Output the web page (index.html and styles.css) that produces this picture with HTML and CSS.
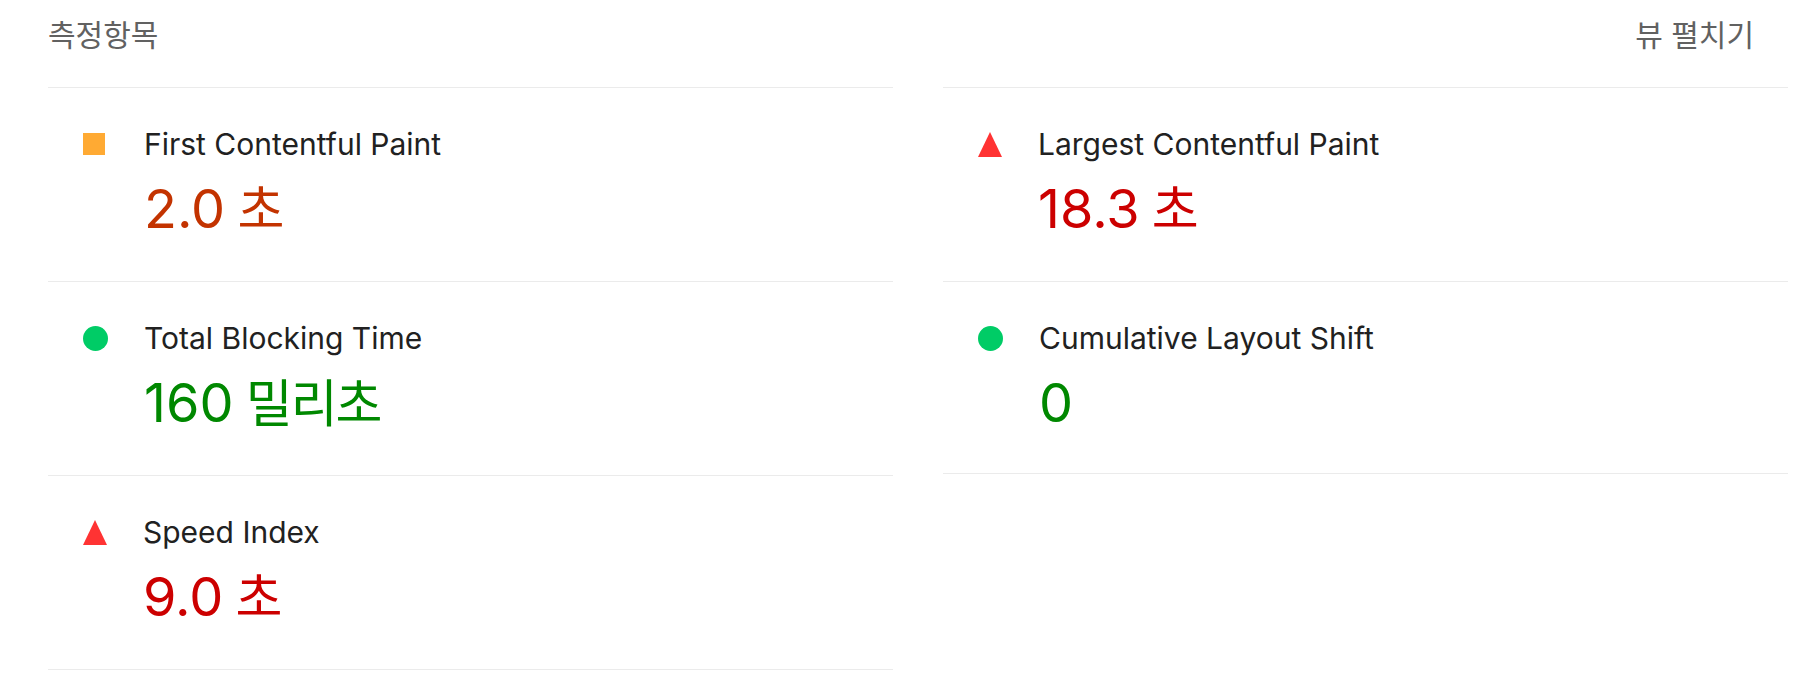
FILE: index.html
```html
<!DOCTYPE html>
<html lang="ko">
<head>
<meta charset="utf-8">
<title>측정항목</title>
<link rel="stylesheet" href="styles.css">
</head>
<body>
<div class="metrics">
  <div class="metrics-header">
    <span class="metrics-title">측정항목</span>
    <span class="metrics-toggle">뷰 펼치기</span>
  </div>
  <div class="metrics-grid">
    <div class="metrics-col">
      <div class="metric">
        <span class="icon icon-average"></span>
        <div class="metric-body">
          <div class="metric-title">First Contentful Paint</div>
          <div class="metric-value value-average">2.0 <span class="unit">초</span></div>
        </div>
      </div>
      <div class="metric">
        <span class="icon icon-pass"></span>
        <div class="metric-body">
          <div class="metric-title">Total Blocking Time</div>
          <div class="metric-value value-pass">160 <span class="unit">밀리초</span></div>
        </div>
      </div>
      <div class="metric">
        <span class="icon icon-fail"></span>
        <div class="metric-body">
          <div class="metric-title">Speed Index</div>
          <div class="metric-value value-fail">9.0 <span class="unit">초</span></div>
        </div>
      </div>
    </div>
    <div class="metrics-col">
      <div class="metric">
        <span class="icon icon-fail"></span>
        <div class="metric-body">
          <div class="metric-title">Largest Contentful Paint</div>
          <div class="metric-value value-fail">18.3 <span class="unit">초</span></div>
        </div>
      </div>
      <div class="metric metric-short">
        <span class="icon icon-pass"></span>
        <div class="metric-body">
          <div class="metric-title">Cumulative Layout Shift</div>
          <div class="metric-value value-pass">0</div>
        </div>
      </div>
    </div>
  </div>
</div>
</body>
</html>
```

FILE: styles.css
```css
html, body {
  margin: 0;
  padding: 0;
  background: #ffffff;
}

body {
  font-family: Inter, "Noto Sans CJK KR", "Noto Sans", sans-serif;
  color: #212121;
}

.metrics {
  width: 1740px;
  padding-left: 48px;
}

.metrics-header {
  display: flex;
  justify-content: space-between;
  align-items: center;
  padding: 13px 0 34px;
  font-family: "Noto Sans CJK KR", sans-serif;
  font-size: 30px;
  line-height: 40px;
  color: #616161;
}

.metrics-toggle {
  padding-right: 34px;
}

.metrics-grid {
  display: grid;
  grid-template-columns: 1fr 1fr;
  column-gap: 50px;
  align-items: start;
}

.metrics-col {
  display: flex;
  flex-direction: column;
  border-top: 1px solid #ebebeb;
}

.metric {
  display: flex;
  align-items: flex-start;
  padding: 36px 0 40px 35px;
  border-bottom: 1px solid #ebebeb;
}

.metric-short {
  padding-bottom: 38px;
}

.icon {
  flex: none;
  width: 25px;
  height: 25px;
  margin-top: 8px;
  margin-right: 36px;
  box-sizing: border-box;
}

.icon-average {
  width: 22px;
  height: 22px;
  margin: 9px 39px 0 0;
  background: #ffaa33;
}

.icon-pass {
  border-radius: 50%;
  background: #00cc66;
}

.icon-fail {
  width: 0;
  height: 0;
  border-left: 12.5px solid transparent;
  border-right: 12.5px solid transparent;
  border-bottom: 25px solid #ff3333;
}

.metric-body {
  display: flex;
  flex-direction: column;
}

.metric-title {
  font-size: 30px;
  line-height: 40px;
  color: #212121;
}

.metric-value {
  height: 64px;
  margin-top: 13px;
  font-size: 54px;
  line-height: 64px;
  word-spacing: -3px;
}

.unit {
  font-size: 51px;
  line-height: 1;
  letter-spacing: -2px;
}

.value-average { color: #c33300; }
.value-pass { color: #008800; }
.value-fail { color: #cc0000; }
```
